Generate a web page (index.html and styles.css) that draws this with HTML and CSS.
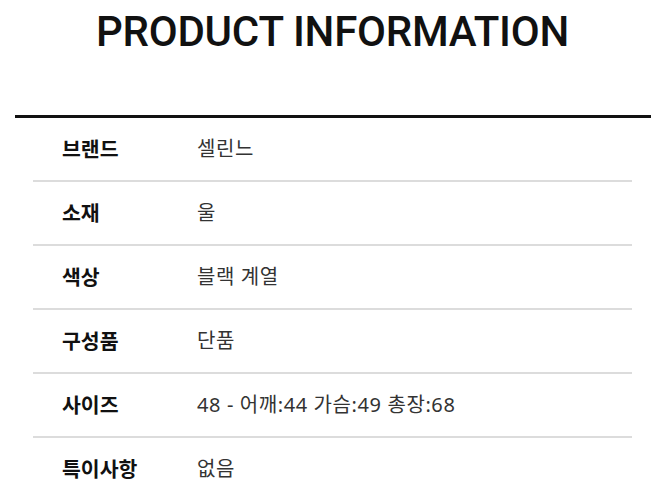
FILE: index.html
```html
<!DOCTYPE html>
<html lang="ko">
<head>
<meta charset="utf-8">
<link rel="stylesheet" href="styles.css">
</head>
<body>
<h1 class="title">PRODUCT INFORMATION</h1>
<section class="info">
  <div class="row"><div class="label">브랜드</div><div class="value">셀린느</div></div>
  <div class="row"><div class="label">소재</div><div class="value">울</div></div>
  <div class="row"><div class="label">색상</div><div class="value">블랙 계열</div></div>
  <div class="row"><div class="label">구성품</div><div class="value">단품</div></div>
  <div class="row"><div class="label">사이즈</div><div class="value">48 - 어깨:44 가슴:49 총장:68</div></div>
  <div class="row"><div class="label">특이사항</div><div class="value">없음</div></div>
</section>
</body>
</html>
```
FILE: styles.css
```css
html, body {
  margin: 0;
  padding: 0;
  background: #fff;
}
body {
  font-family: "Noto Sans CJK KR", "Noto Sans", sans-serif;
  color: #111;
  overflow: hidden;
}
.title {
  margin: 0 0 57px;
  padding: 7px 5px 0 0;
  height: 51px;
  text-align: center;
  font-family: Roboto, "Noto Sans", sans-serif;
  font-weight: 500;
  font-size: 42px;
  line-height: 50px;
  letter-spacing: -0.25px;
  color: #111;
}
.info {
  margin: 0 19px 0 15px;
  border-top: 3px solid #111;
}
.row {
  display: flex;
  align-items: center;
  box-sizing: border-box;
  height: 64px;
  padding-bottom: 3px;
  margin: 0 19px 0 18px;
  border-bottom: 2px solid #dcdcdc;
}
.label {
  width: 164px;
  padding-left: 29px;
  box-sizing: border-box;
  font-size: 20.5px;
  font-weight: 700;
  color: #111;
}
.value {
  font-family: "Noto Sans", "Noto Sans CJK KR", sans-serif;
  font-size: 20px;
  font-weight: 400;
  letter-spacing: 0.6px;
  color: #333;
}
```
